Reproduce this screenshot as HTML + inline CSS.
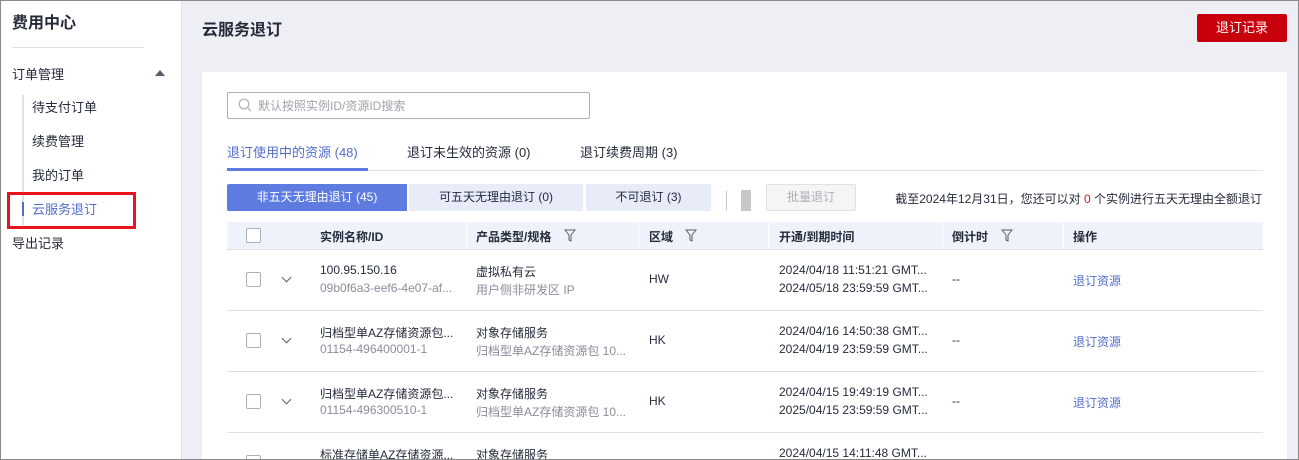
<!DOCTYPE html>
<html><head><meta charset="utf-8"><style>
*{margin:0;padding:0;box-sizing:border-box}
html{width:1299px;height:460px;overflow:hidden}
body{width:1299px;height:460px;overflow:hidden;font-family:"Liberation Sans","Noto Sans CJK SC",sans-serif;font-size:12px;color:#252b3a;background:#eeeff4;position:relative}
.a{position:absolute;white-space:nowrap}
.frame{position:absolute;left:0;top:0;width:1299px;height:460px;border:1px solid #8a8a8a;pointer-events:none;z-index:10}
.side{position:absolute;left:0;top:0;width:182px;height:460px;background:#fff;border-right:1px solid #dfe1e6}
.card{position:absolute;left:202px;top:72px;width:1085px;height:400px;background:#fff}
.seg{position:absolute;top:184px;height:27px;background:#e8ecf8;color:#252b3a;text-align:center;line-height:27px;font-size:12px}
.cb{position:absolute;width:15px;height:15px;border:1px solid #adb0b8;border-radius:2px;background:#fff}
.hd{position:absolute;top:222px;height:28px;background:#eef2fa}
.ht{position:absolute;top:228px;color:#252b3a;font-weight:bold;-webkit-text-stroke:0}
.sep{position:absolute;top:222px;width:1px;height:27px;background:#fff}
.line{position:absolute;left:227px;width:1036px;height:1px;background:#dfe1e6}
.g{color:#8a8e99}
.lk{color:#526ecc}
.chev{position:absolute;width:7px;height:7px;border-right:1.5px solid #575d6c;border-bottom:1.5px solid #575d6c;transform:rotate(45deg)}
</style></head><body>
<div class="side">
  <div class="a" style="left:12px;top:9px;font-size:16px;font-weight:bold;color:#252b3a">费用中心</div>
  <div class="a" style="left:12px;top:47px;width:132px;height:1px;background:#dfe1e6"></div>
  <div class="a" style="left:12px;top:64px;font-size:13px">订单管理</div>
  <div class="a" style="left:155px;top:70px;width:0;height:0;border-left:5px solid transparent;border-right:5px solid transparent;border-bottom:6px solid #575d6c"></div>
  <div class="a" style="left:22px;top:95px;width:2px;height:130px;background:#dfe1e6"></div>
  <div class="a" style="left:32px;top:97px;font-size:13px">待支付订单</div>
  <div class="a" style="left:32px;top:131px;font-size:13px">续费管理</div>
  <div class="a" style="left:32px;top:165px;font-size:13px">我的订单</div>
  <div class="a" style="left:22px;top:202px;width:2px;height:14px;background:#526ecc"></div>
  <div class="a" style="left:32px;top:199px;font-size:13px;color:#526ecc">云服务退订</div>
  <div class="a" style="left:7px;top:192px;width:129px;height:37px;border:3px solid #e8141e"></div>
  <div class="a" style="left:12px;top:233px;font-size:13px">导出记录</div>
</div>
<div class="a" style="left:202px;top:16px;font-size:16px;font-weight:bold;color:#252b3a">云服务退订</div>
<div class="a" style="left:1197px;top:14px;width:90px;height:28px;background:#c7000b;border-radius:2px;color:#fff;text-align:center;line-height:28px;font-size:13px">退订记录</div>
<div class="card"></div>
<div class="a" style="left:227px;top:92px;width:363px;height:27px;border:1px solid #adb0b8;border-radius:2px"></div>
<svg class="a" style="left:238px;top:98px" width="14" height="14" viewBox="0 0 14 14"><circle cx="6" cy="6" r="4.8" fill="none" stroke="#adb0b8" stroke-width="1.2"/><line x1="9.5" y1="9.5" x2="13" y2="13" stroke="#adb0b8" stroke-width="1.2"/></svg>
<div class="a" style="left:258px;top:97px;font-size:12px;color:#a0a3ab">默认按照实例ID/资源ID搜索</div>
<div class="a" style="left:227px;top:142px;font-size:13px;color:#526ecc">退订使用中的资源 (48)</div>
<div class="a" style="left:407px;top:142px;font-size:13px">退订未生效的资源 (0)</div>
<div class="a" style="left:580px;top:142px;font-size:13px">退订续费周期 (3)</div>
<div class="a" style="left:227px;top:170px;width:1036px;height:1px;background:#dfe1e6"></div>
<div class="a" style="left:227px;top:168px;width:141px;height:3px;background:#5e7ce0"></div>
<div class="seg" style="left:227px;width:180px;background:#5e7ce0;color:#fff;border-radius:2px 0 0 2px">非五天无理由退订 (45)</div>
<div class="seg" style="left:409px;width:174px">可五天无理由退订 (0)</div>
<div class="seg" style="left:586px;width:125px">不可退订 (3)</div>
<div class="a" style="left:726px;top:191px;width:1px;height:19px;background:#c2c4c9"></div>
<div class="a" style="left:741px;top:190px;width:10px;height:21px;background:#c8c8c8"></div>
<div class="a" style="left:766px;top:184px;width:90px;height:27px;border:1px solid #dfe1e6;background:#f5f5f6;color:#adb0b8;text-align:center;line-height:25px;border-radius:2px">批量退订</div>
<div class="a" style="right:37px;top:190px;font-size:12px">截至2024年12月31日，您还可以对 <span style="color:#e8141e">0</span> 个实例进行五天无理由全额退订</div>
<div class="hd" style="left:227px;width:1036px"></div>
<div class="sep" style="left:466px"></div><div class="sep" style="left:638px"></div><div class="sep" style="left:768px"></div><div class="sep" style="left:942px"></div><div class="sep" style="left:1063px"></div>
<div class="cb" style="left:246px;top:228px"></div>
<div class="ht" style="left:320px">实例名称/ID</div>
<div class="ht" style="left:476px">产品类型/规格</div>
<div class="ht" style="left:649px">区域</div>
<div class="ht" style="left:779px">开通/到期时间</div>
<div class="ht" style="left:952px">倒计时</div>
<div class="ht" style="left:1073px">操作</div>
<svg class="a" style="left:564px;top:229px" width="12" height="13"><path d="M1 1H11L7 6V12L5 11V6Z" fill="none" stroke="#575d6c"/></svg>
<svg class="a" style="left:685px;top:229px" width="12" height="13"><path d="M1 1H11L7 6V12L5 11V6Z" fill="none" stroke="#575d6c"/></svg>
<svg class="a" style="left:1001px;top:229px" width="12" height="13"><path d="M1 1H11L7 6V12L5 11V6Z" fill="none" stroke="#575d6c"/></svg>
<div class="line" style="top:249px"></div>
<div class="cb" style="left:246px;top:272px"></div><div class="chev" style="left:283px;top:274px"></div>
<div class="a" style="left:320px;top:263px">100.95.150.16</div>
<div class="a g" style="left:320px;top:281px">09b0f6a3-eef6-4e07-af...</div>
<div class="a" style="left:476px;top:263px">虚拟私有云</div>
<div class="a g" style="left:476px;top:281px">用户侧非研发区 IP</div>
<div class="a" style="left:649px;top:272px">HW</div>
<div class="a" style="left:779px;top:263px">2024/04/18 11:51:21 GMT...</div>
<div class="a" style="left:779px;top:281px">2024/05/18 23:59:59 GMT...</div>
<div class="a" style="left:952px;top:272px">--</div>
<div class="a lk" style="left:1073px;top:272px">退订资源</div>
<div class="line" style="top:310px"></div>
<div class="cb" style="left:246px;top:333px"></div><div class="chev" style="left:283px;top:335px"></div>
<div class="a" style="left:320px;top:324px">归档型单AZ存储资源包...</div>
<div class="a g" style="left:320px;top:342px">01154-496400001-1</div>
<div class="a" style="left:476px;top:324px">对象存储服务</div>
<div class="a g" style="left:476px;top:342px">归档型单AZ存储资源包 10...</div>
<div class="a" style="left:649px;top:333px">HK</div>
<div class="a" style="left:779px;top:324px">2024/04/16 14:50:38 GMT...</div>
<div class="a" style="left:779px;top:342px">2024/04/19 23:59:59 GMT...</div>
<div class="a" style="left:952px;top:333px">--</div>
<div class="a lk" style="left:1073px;top:333px">退订资源</div>
<div class="line" style="top:371px"></div>
<div class="cb" style="left:246px;top:394px"></div><div class="chev" style="left:283px;top:396px"></div>
<div class="a" style="left:320px;top:385px">归档型单AZ存储资源包...</div>
<div class="a g" style="left:320px;top:403px">01154-496300510-1</div>
<div class="a" style="left:476px;top:385px">对象存储服务</div>
<div class="a g" style="left:476px;top:403px">归档型单AZ存储资源包 10...</div>
<div class="a" style="left:649px;top:394px">HK</div>
<div class="a" style="left:779px;top:385px">2024/04/15 19:49:19 GMT...</div>
<div class="a" style="left:779px;top:403px">2025/04/15 23:59:59 GMT...</div>
<div class="a" style="left:952px;top:394px">--</div>
<div class="a lk" style="left:1073px;top:394px">退订资源</div>
<div class="line" style="top:432px"></div>
<div class="cb" style="left:246px;top:455px"></div>
<div class="a" style="left:320px;top:446px">标准存储单AZ存储资源...</div>
<div class="a" style="left:476px;top:446px">对象存储服务</div>
<div class="a" style="left:779px;top:446px">2024/04/15 14:11:48 GMT...</div>
<div class="frame"></div>
</body></html>
